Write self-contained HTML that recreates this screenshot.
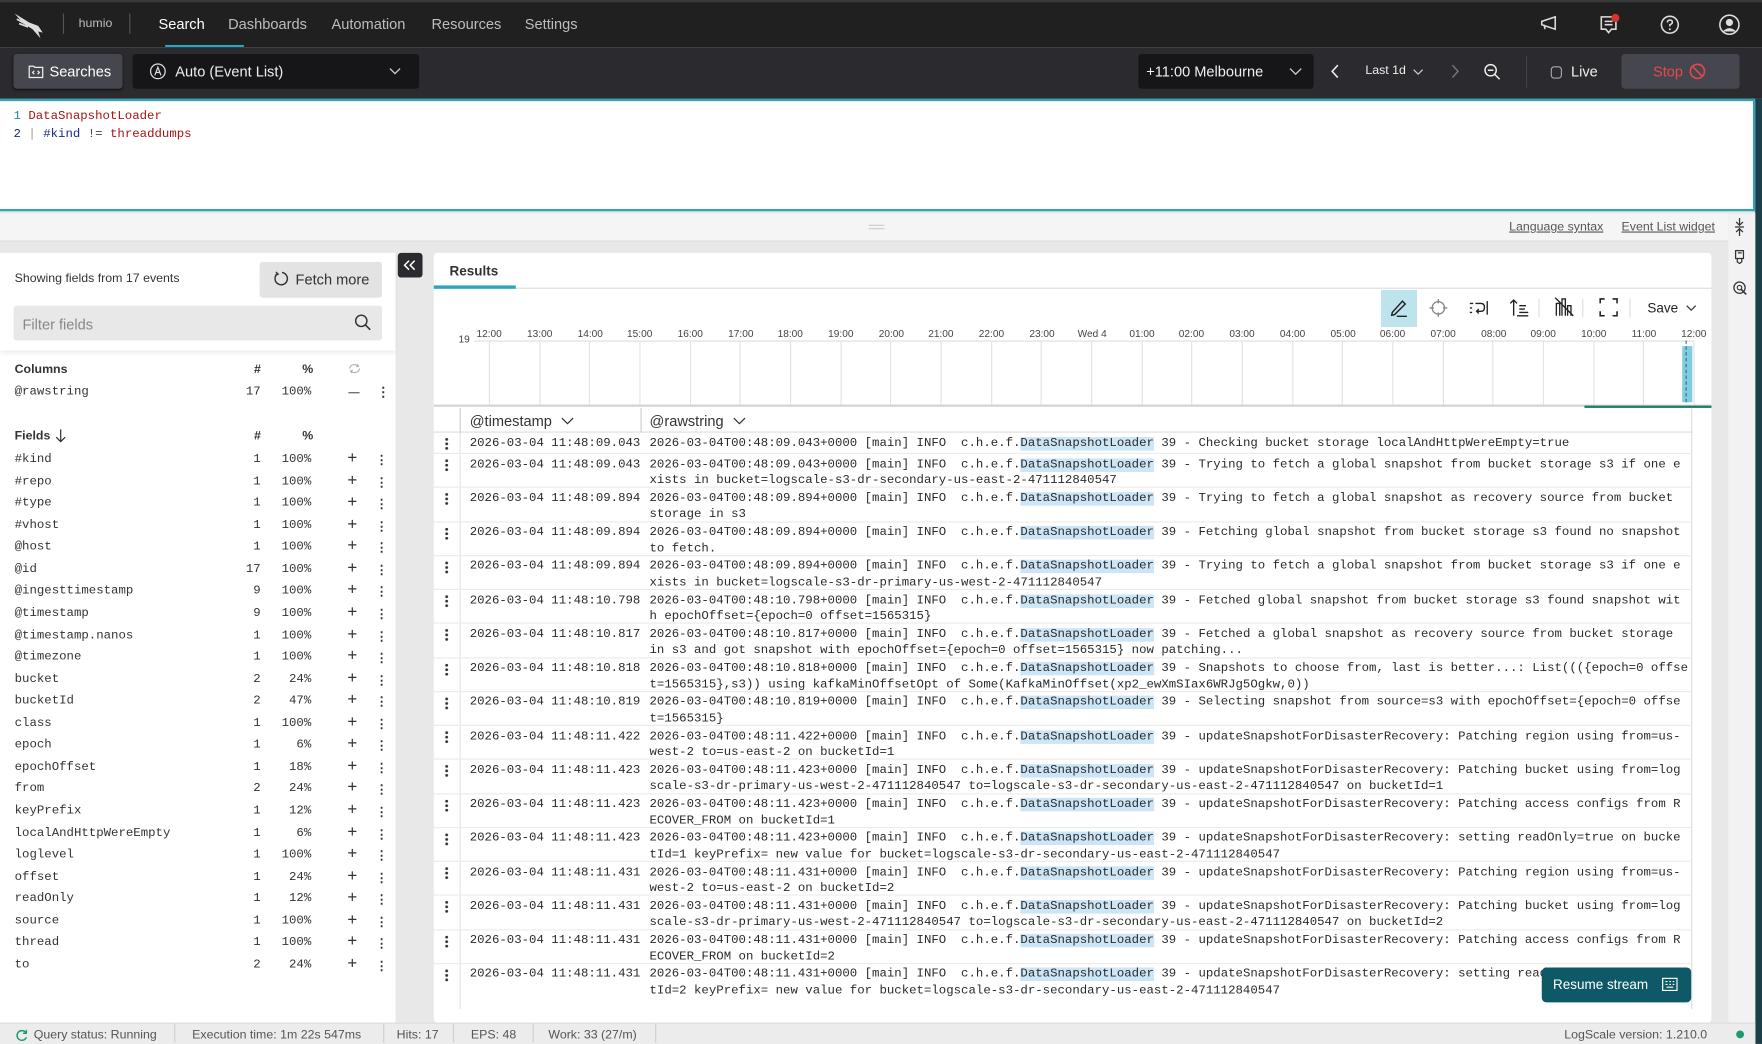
<!DOCTYPE html>
<html><head><meta charset="utf-8">
<style>
*{box-sizing:border-box;margin:0;padding:0}
html,body{width:1762px;height:1044px;overflow:hidden;background:#e8e8e8}
#w{position:absolute;left:0;top:0;width:1568px;height:929px;transform:scale(1.123724);transform-origin:0 0;font-family:"Liberation Sans",sans-serif;color:#222;background:#e8e8e8;overflow:hidden}
.a{position:absolute}
.mono{font-family:"Liberation Mono",monospace}
.nav{left:0;top:0;width:1568px;height:42px;background:#202020;border-top:2px solid #3a3a3a}
.nav span{position:absolute;top:12px;font-size:13px;color:#bdbdbd}
.tb{left:0;top:42px;width:1568px;height:46px;background:#2b2b2f}
.btn{position:absolute;border-radius:3px}
.ed{left:0;top:88px;width:1562px;height:100px;background:#fff;border:2px solid #2ba6be;border-left:none}
.fl{position:absolute;left:13px;font-size:11px;font-family:"Liberation Mono",monospace;color:#333}
.fn{position:absolute;font-size:11px;font-family:"Liberation Mono",monospace;color:#333;text-align:right}
.row{position:absolute;left:386px;width:1120px;border-bottom:1px solid #ebebeb;font-family:"Liberation Mono",monospace;font-size:11px;line-height:14.5px;color:#2a2a2a;white-space:pre}
.row .d{position:absolute;left:10px;top:4px;width:3px;height:12px;background:radial-gradient(circle,#333 1.2px,transparent 1.4px) 0 0/3px 4px repeat-y}
.row .t{position:absolute;left:32px;top:2.5px}
.row .r{position:absolute;left:192px;top:2.5px}
.h{background:#cde6f7}
.tl{position:absolute;top:292px;font-size:9px;color:#444}
.gl{position:absolute;top:303px;width:1px;height:57px;background:#e2e2e2}
.st{position:absolute;top:915px;font-size:11px;color:#555}
.sp{position:absolute;top:911px;width:1px;height:17px;background:#cfcfcf}
</style></head><body><div id="w">

<!-- top nav -->
<div class="a nav">
 <svg class="a" style="left:12px;top:9px" width="28" height="24" viewBox="0 0 28 24"><path d="M1 1 L14 9 L22 12 L26 18 L22 17 L24 23 L17 15 L9 10 Z" fill="#ddd"/><path d="M3 6 L12 11 M5 10 L13 13" stroke="#ddd" stroke-width="1.5"/></svg>
 <div class="a" style="left:56px;top:10px;width:1px;height:18px;background:#555"></div>
 <span style="left:70px;font-size:11px;top:13px">humio</span>
 <div class="a" style="left:115px;top:10px;width:1px;height:18px;background:#555"></div>
 <span style="left:141px;color:#fff">Search</span>
 <div class="a" style="left:147px;top:38px;width:70px;height:3px;background:#2ba6be"></div>
 <span style="left:203px">Dashboards</span>
 <span style="left:295px">Automation</span>
 <span style="left:384px">Resources</span>
 <span style="left:467px">Settings</span>
 <svg class="a" style="left:1370px;top:11px" width="18" height="16" viewBox="0 0 18 16"><path d="M2 6 L14 2 L14 13 L2 9 Z M4 9 L5 13" fill="none" stroke="#ddd" stroke-width="1.4"/></svg>
 <svg class="a" style="left:1423px;top:10px" width="20" height="20" viewBox="0 0 20 20"><path d="M2 3 H15 V14 H11 L8.5 17 L6 14 H2 Z M5 7 H12 M5 10 H12" fill="none" stroke="#ddd" stroke-width="1.4"/><circle cx="14.5" cy="4" r="3.6" fill="#d8332f"/></svg>
 <svg class="a" style="left:1477px;top:11px" width="18" height="18" viewBox="0 0 18 18"><circle cx="9" cy="9" r="7.5" fill="none" stroke="#ddd" stroke-width="1.4"/><path d="M6.8 7 Q7 4.8 9 4.8 Q11.2 4.8 11.2 6.8 Q11.2 8.3 9 9 V10.5" fill="none" stroke="#ddd" stroke-width="1.4"/><circle cx="9" cy="13" r="0.9" fill="#ddd"/></svg>
 <svg class="a" style="left:1529px;top:10px" width="20" height="20" viewBox="0 0 20 20"><circle cx="10" cy="10" r="8.5" fill="none" stroke="#ddd" stroke-width="1.4"/><circle cx="10" cy="8" r="3.2" fill="#ddd"/><path d="M4 16 Q10 10 16 16" fill="#ddd"/></svg>
</div>

<!-- toolbar -->
<div class="a tb">
 <div class="btn" style="left:12px;top:6px;width:97px;height:31px;background:#46464e;box-shadow:0 1px 2px #111"></div>
 <svg class="a" style="left:25px;top:15px" width="14" height="13" viewBox="0 0 14 13"><path d="M1 2 H5 L6 3 H13 V12 H1 Z M5.5 6 L4 7.5 L5.5 9 M8.5 6 L10 7.5 L8.5 9" fill="none" stroke="#eee" stroke-width="1.1"/></svg>
 <div class="a" style="left:44px;top:14px;font-size:13px;color:#fff">Searches</div>
 <div class="btn" style="left:118px;top:6px;width:255px;height:31px;background:#161618"></div>
 <svg class="a" style="left:133px;top:14px" width="15" height="15" viewBox="0 0 15 15"><circle cx="7.5" cy="7.5" r="6.5" fill="none" stroke="#ddd" stroke-width="1.1"/><path d="M4.8 11 L7.5 3.8 L10.2 11 M5.8 8.5 H9.2" fill="none" stroke="#ddd" stroke-width="1.1"/></svg>
 <div class="a" style="left:156px;top:14px;font-size:13px;color:#eee">Auto (Event List)</div>
 <svg class="a" style="left:346px;top:18px" width="11" height="7" viewBox="0 0 11 7"><path d="M1 1 L5.5 5.5 L10 1" fill="none" stroke="#ccc" stroke-width="1.2"/></svg>
 <div class="btn" style="left:1013px;top:6px;width:156px;height:31px;background:#161618"></div>
 <div class="a" style="left:1020px;top:14px;font-size:13px;color:#eee">+11:00 Melbourne</div>
 <svg class="a" style="left:1147px;top:18px" width="12" height="7" viewBox="0 0 12 7"><path d="M1 1 L6 6 L11 1" fill="none" stroke="#ccc" stroke-width="1.2"/></svg>
 <svg class="a" style="left:1184px;top:15px" width="8" height="13" viewBox="0 0 8 13"><path d="M6.5 1 L1.5 6.5 L6.5 12" fill="none" stroke="#eee" stroke-width="1.4"/></svg>
 <div class="a" style="left:1215px;top:15px;font-size:11px;color:#eee">Last 1d</div>
 <svg class="a" style="left:1257px;top:19px" width="10" height="6" viewBox="0 0 10 6"><path d="M1 1 L5 5 L9 1" fill="none" stroke="#ccc" stroke-width="1.1"/></svg>
 <svg class="a" style="left:1291px;top:15px" width="8" height="13" viewBox="0 0 8 13"><path d="M1.5 1 L6.5 6.5 L1.5 12" fill="none" stroke="#777" stroke-width="1.3"/></svg>
 <svg class="a" style="left:1320px;top:14px" width="16" height="16" viewBox="0 0 16 16"><circle cx="6.5" cy="6.5" r="5" fill="none" stroke="#eee" stroke-width="1.3"/><path d="M4 6.5 H9 M10.2 10.2 L14.5 14.5" stroke="#eee" stroke-width="1.3"/></svg>
 <div class="a" style="left:1358px;top:8px;width:1px;height:28px;background:#444"></div>
 <div class="a" style="left:1380px;top:17px;width:10px;height:11px;border:1.3px solid #aaa;border-radius:3px"></div>
 <div class="a" style="left:1398px;top:14px;font-size:13px;color:#eee">Live</div>
 <div class="btn" style="left:1443px;top:6px;width:105px;height:31px;background:#46464e"></div>
 <div class="a" style="left:1471px;top:14px;font-size:13px;color:#e5484d">Stop</div>
 <svg class="a" style="left:1503px;top:14px" width="15" height="15" viewBox="0 0 15 15"><circle cx="7.5" cy="7.5" r="6.3" fill="none" stroke="#e5484d" stroke-width="1.4"/><path d="M3 3 L12 12" stroke="#e5484d" stroke-width="1.4"/></svg>
</div>

<!-- editor -->
<div class="a ed">
 <div class="a mono" style="left:12px;top:6px;font-size:11px;line-height:16px;white-space:pre"><span style="color:#2a8aa6">1</span> <span style="color:#a31515">DataSnapshotLoader</span>
<span style="color:#1a2a8a">2</span> <span style="color:#999">|</span> <span style="color:#1a2a8a">#kind</span> <span style="color:#444">!=</span> <span style="color:#a31515">threaddumps</span></div>
</div>
<div class="a" style="left:1562px;top:88px;width:6px;height:841px;background:#1d3f4a"></div>

<!-- sub bar -->
<div class="a" style="left:0;top:190px;width:1538px;height:25px;background:#f5f5f5;border-bottom:1px solid #ddd"></div>
<div class="a" style="left:773px;top:200px;width:14px;height:4px;border-top:1px solid #ccc;border-bottom:1px solid #ccc"></div>
<div class="a" style="left:1343px;top:196px;font-size:11px;color:#555;text-decoration:underline">Language syntax</div>
<div class="a" style="left:1443px;top:196px;font-size:11px;color:#555;text-decoration:underline">Event List widget</div>
<div class="a" style="left:1538px;top:190px;width:24px;height:739px;background:#f2f2f2"></div>
<svg class="a" style="left:1543px;top:194px" width="10" height="16" viewBox="0 0 10 16"><path d="M5 0 V6 M2 3.5 L5 6.5 L8 3.5 M1 8 H9 M5 16 V10 M2 12.5 L5 9.5 L8 12.5" fill="none" stroke="#333" stroke-width="1.1"/></svg>
<svg class="a" style="left:1543px;top:222px" width="10" height="13" viewBox="0 0 10 13"><path d="M1.5 1 H8.5 V8 H1.5 Z M3 8 V11 L5 12.5 L7 11 V8 M3.5 3 H7" fill="none" stroke="#333" stroke-width="1.1"/></svg>
<svg class="a" style="left:1542px;top:250px" width="13" height="13" viewBox="0 0 13 13"><circle cx="6" cy="6" r="5" fill="none" stroke="#333" stroke-width="1.1"/><circle cx="6" cy="6" r="2" fill="none" stroke="#333"/><path d="M7 7 L12 12" stroke="#333" stroke-width="1.4"/></svg>

<!-- left panel -->
<div class="a" style="left:0;top:225px;width:352px;height:685px;background:#fff"></div>
<div class="a" style="left:0;top:225px;width:352px;height:87px;background:#fff;box-shadow:0 2px 4px rgba(0,0,0,.08)"></div>
<div class="a" style="left:13px;top:242px;font-size:11px;color:#333">Showing fields from 17 events</div>
<div class="btn" style="left:231px;top:233px;width:109px;height:32px;background:#e3e3e3"></div>
<svg class="a" style="left:244px;top:241px" width="14" height="14" viewBox="0 0 14 14"><path d="M3 2.5 A5.5 5.5 0 1 0 7 1.5" fill="none" stroke="#333" stroke-width="1.3"/><path d="M1.5 1 L3.5 3 L1 4" fill="none" stroke="#333" stroke-width="1.2"/></svg>
<div class="a" style="left:263px;top:241px;font-size:13px;color:#333">Fetch more</div>
<div class="btn" style="left:12px;top:272px;width:328px;height:31px;background:#e8e8e8"></div>
<div class="a" style="left:20px;top:281px;font-size:13px;color:#888">Filter fields</div>
<svg class="a" style="left:315px;top:279px" width="16" height="16" viewBox="0 0 16 16"><circle cx="6.5" cy="6.5" r="5" fill="none" stroke="#333" stroke-width="1.3"/><path d="M10.2 10.2 L14.5 14.5" stroke="#333" stroke-width="1.4"/></svg>

<div class="a" style="left:13px;top:323px;font-size:11px;font-weight:bold;color:#333">Columns</div>
<div class="a" style="left:226px;top:323px;font-size:11px;font-weight:bold;color:#333">#</div>
<div class="a" style="left:269px;top:323px;font-size:11px;font-weight:bold;color:#333">%</div>
<svg class="a" style="left:310px;top:323px" width="11" height="10" viewBox="0 0 11 10"><path d="M1 5 A4.5 4 0 0 1 9 3 M10 5 A4.5 4 0 0 1 2 7 M8 1 L9 3 L7 3.5 M3 9 L2 7 L4 6.5" fill="none" stroke="#aaa" stroke-width="0.9"/></svg>
<div class="fl" style="top:343px">@rawstring</div>
<div class="fn" style="left:200px;width:32px;top:343px">17</div>
<div class="fn" style="left:237px;width:40px;top:343px">100%</div>
<div class="a" style="left:310px;top:349px;width:10px;height:1px;background:#555"></div>
<div class="a" style="left:335px;top:342px;font-size:12px;font-weight:bold;color:#333">⋮</div>

<div class="a" style="left:13px;top:382px;font-size:11px;font-weight:bold;color:#333">Fields</div>
<svg class="a" style="left:49px;top:382px" width="10" height="12" viewBox="0 0 10 12"><path d="M5 0 V11 M1 7 L5 11 L9 7" fill="none" stroke="#333" stroke-width="1.1"/></svg>
<div class="a" style="left:226px;top:382px;font-size:11px;font-weight:bold;color:#333">#</div>
<div class="a" style="left:269px;top:382px;font-size:11px;font-weight:bold;color:#333">%</div>

<div class="a" style="left:0;top:403px;width:352px">
<div style="position:relative;height:19.57px"><div class="fl" style="top:0">#kind</div><div class="fn" style="left:200px;width:32px">1</div><div class="fn" style="left:237px;width:40px">100%</div><div class="fn" style="left:309px;font-size:15px;top:-3px">+</div><div class="fn" style="left:334px;top:0;font-weight:bold;font-family:'Liberation Sans'">⋮</div></div>
<div style="position:relative;height:19.57px"><div class="fl" style="top:0">#repo</div><div class="fn" style="left:200px;width:32px">1</div><div class="fn" style="left:237px;width:40px">100%</div><div class="fn" style="left:309px;font-size:15px;top:-3px">+</div><div class="fn" style="left:334px;font-weight:bold;font-family:'Liberation Sans'">⋮</div></div>
<div style="position:relative;height:19.57px"><div class="fl" style="top:0">#type</div><div class="fn" style="left:200px;width:32px">1</div><div class="fn" style="left:237px;width:40px">100%</div><div class="fn" style="left:309px;font-size:15px;top:-3px">+</div><div class="fn" style="left:334px;font-weight:bold;font-family:'Liberation Sans'">⋮</div></div>
<div style="position:relative;height:19.57px"><div class="fl" style="top:0">#vhost</div><div class="fn" style="left:200px;width:32px">1</div><div class="fn" style="left:237px;width:40px">100%</div><div class="fn" style="left:309px;font-size:15px;top:-3px">+</div><div class="fn" style="left:334px;font-weight:bold;font-family:'Liberation Sans'">⋮</div></div>
<div style="position:relative;height:19.57px"><div class="fl" style="top:0">@host</div><div class="fn" style="left:200px;width:32px">1</div><div class="fn" style="left:237px;width:40px">100%</div><div class="fn" style="left:309px;font-size:15px;top:-3px">+</div><div class="fn" style="left:334px;font-weight:bold;font-family:'Liberation Sans'">⋮</div></div>
<div style="position:relative;height:19.57px"><div class="fl" style="top:0">@id</div><div class="fn" style="left:200px;width:32px">17</div><div class="fn" style="left:237px;width:40px">100%</div><div class="fn" style="left:309px;font-size:15px;top:-3px">+</div><div class="fn" style="left:334px;font-weight:bold;font-family:'Liberation Sans'">⋮</div></div>
<div style="position:relative;height:19.57px"><div class="fl" style="top:0">@ingesttimestamp</div><div class="fn" style="left:200px;width:32px">9</div><div class="fn" style="left:237px;width:40px">100%</div><div class="fn" style="left:309px;font-size:15px;top:-3px">+</div><div class="fn" style="left:334px;font-weight:bold;font-family:'Liberation Sans'">⋮</div></div>
<div style="position:relative;height:19.57px"><div class="fl" style="top:0">@timestamp</div><div class="fn" style="left:200px;width:32px">9</div><div class="fn" style="left:237px;width:40px">100%</div><div class="fn" style="left:309px;font-size:15px;top:-3px">+</div><div class="fn" style="left:334px;font-weight:bold;font-family:'Liberation Sans'">⋮</div></div>
<div style="position:relative;height:19.57px"><div class="fl" style="top:0">@timestamp.nanos</div><div class="fn" style="left:200px;width:32px">1</div><div class="fn" style="left:237px;width:40px">100%</div><div class="fn" style="left:309px;font-size:15px;top:-3px">+</div><div class="fn" style="left:334px;font-weight:bold;font-family:'Liberation Sans'">⋮</div></div>
<div style="position:relative;height:19.57px"><div class="fl" style="top:0">@timezone</div><div class="fn" style="left:200px;width:32px">1</div><div class="fn" style="left:237px;width:40px">100%</div><div class="fn" style="left:309px;font-size:15px;top:-3px">+</div><div class="fn" style="left:334px;font-weight:bold;font-family:'Liberation Sans'">⋮</div></div>
<div style="position:relative;height:19.57px"><div class="fl" style="top:0">bucket</div><div class="fn" style="left:200px;width:32px">2</div><div class="fn" style="left:237px;width:40px">24%</div><div class="fn" style="left:309px;font-size:15px;top:-3px">+</div><div class="fn" style="left:334px;font-weight:bold;font-family:'Liberation Sans'">⋮</div></div>
<div style="position:relative;height:19.57px"><div class="fl" style="top:0">bucketId</div><div class="fn" style="left:200px;width:32px">2</div><div class="fn" style="left:237px;width:40px">47%</div><div class="fn" style="left:309px;font-size:15px;top:-3px">+</div><div class="fn" style="left:334px;font-weight:bold;font-family:'Liberation Sans'">⋮</div></div>
<div style="position:relative;height:19.57px"><div class="fl" style="top:0">class</div><div class="fn" style="left:200px;width:32px">1</div><div class="fn" style="left:237px;width:40px">100%</div><div class="fn" style="left:309px;font-size:15px;top:-3px">+</div><div class="fn" style="left:334px;font-weight:bold;font-family:'Liberation Sans'">⋮</div></div>
<div style="position:relative;height:19.57px"><div class="fl" style="top:0">epoch</div><div class="fn" style="left:200px;width:32px">1</div><div class="fn" style="left:237px;width:40px">6%</div><div class="fn" style="left:309px;font-size:15px;top:-3px">+</div><div class="fn" style="left:334px;font-weight:bold;font-family:'Liberation Sans'">⋮</div></div>
<div style="position:relative;height:19.57px"><div class="fl" style="top:0">epochOffset</div><div class="fn" style="left:200px;width:32px">1</div><div class="fn" style="left:237px;width:40px">18%</div><div class="fn" style="left:309px;font-size:15px;top:-3px">+</div><div class="fn" style="left:334px;font-weight:bold;font-family:'Liberation Sans'">⋮</div></div>
<div style="position:relative;height:19.57px"><div class="fl" style="top:0">from</div><div class="fn" style="left:200px;width:32px">2</div><div class="fn" style="left:237px;width:40px">24%</div><div class="fn" style="left:309px;font-size:15px;top:-3px">+</div><div class="fn" style="left:334px;font-weight:bold;font-family:'Liberation Sans'">⋮</div></div>
<div style="position:relative;height:19.57px"><div class="fl" style="top:0">keyPrefix</div><div class="fn" style="left:200px;width:32px">1</div><div class="fn" style="left:237px;width:40px">12%</div><div class="fn" style="left:309px;font-size:15px;top:-3px">+</div><div class="fn" style="left:334px;font-weight:bold;font-family:'Liberation Sans'">⋮</div></div>
<div style="position:relative;height:19.57px"><div class="fl" style="top:0">localAndHttpWereEmpty</div><div class="fn" style="left:200px;width:32px">1</div><div class="fn" style="left:237px;width:40px">6%</div><div class="fn" style="left:309px;font-size:15px;top:-3px">+</div><div class="fn" style="left:334px;font-weight:bold;font-family:'Liberation Sans'">⋮</div></div>
<div style="position:relative;height:19.57px"><div class="fl" style="top:0">loglevel</div><div class="fn" style="left:200px;width:32px">1</div><div class="fn" style="left:237px;width:40px">100%</div><div class="fn" style="left:309px;font-size:15px;top:-3px">+</div><div class="fn" style="left:334px;font-weight:bold;font-family:'Liberation Sans'">⋮</div></div>
<div style="position:relative;height:19.57px"><div class="fl" style="top:0">offset</div><div class="fn" style="left:200px;width:32px">1</div><div class="fn" style="left:237px;width:40px">24%</div><div class="fn" style="left:309px;font-size:15px;top:-3px">+</div><div class="fn" style="left:334px;font-weight:bold;font-family:'Liberation Sans'">⋮</div></div>
<div style="position:relative;height:19.57px"><div class="fl" style="top:0">readOnly</div><div class="fn" style="left:200px;width:32px">1</div><div class="fn" style="left:237px;width:40px">12%</div><div class="fn" style="left:309px;font-size:15px;top:-3px">+</div><div class="fn" style="left:334px;font-weight:bold;font-family:'Liberation Sans'">⋮</div></div>
<div style="position:relative;height:19.57px"><div class="fl" style="top:0">source</div><div class="fn" style="left:200px;width:32px">1</div><div class="fn" style="left:237px;width:40px">100%</div><div class="fn" style="left:309px;font-size:15px;top:-3px">+</div><div class="fn" style="left:334px;font-weight:bold;font-family:'Liberation Sans'">⋮</div></div>
<div style="position:relative;height:19.57px"><div class="fl" style="top:0">thread</div><div class="fn" style="left:200px;width:32px">1</div><div class="fn" style="left:237px;width:40px">100%</div><div class="fn" style="left:309px;font-size:15px;top:-3px">+</div><div class="fn" style="left:334px;font-weight:bold;font-family:'Liberation Sans'">⋮</div></div>
<div style="position:relative;height:19.57px"><div class="fl" style="top:0">to</div><div class="fn" style="left:200px;width:32px">2</div><div class="fn" style="left:237px;width:40px">24%</div><div class="fn" style="left:309px;font-size:15px;top:-3px">+</div><div class="fn" style="left:334px;font-weight:bold;font-family:'Liberation Sans'">⋮</div></div>
</div>

<!-- collapse -->
<div class="btn" style="left:354px;top:225px;width:22px;height:22px;background:#2b2b2f"></div>
<svg class="a" style="left:359px;top:231px" width="12" height="10" viewBox="0 0 12 10"><path d="M5 1 L1 5 L5 9 M10 1 L6 5 L10 9" fill="none" stroke="#fff" stroke-width="1.3"/></svg>

<!-- results panel -->
<div class="a" style="left:386px;top:225px;width:1137px;height:685px;background:#fff;border-radius:3px"></div>
<div class="a" style="left:400px;top:234px;font-size:12px;font-weight:bold;color:#333">Results</div>
<div class="a" style="left:386px;top:256px;width:1137px;height:1px;background:#ddd"></div>
<div class="a" style="left:386px;top:254px;width:73px;height:3px;background:#2ba6be"></div>

<div class="a" style="left:1229px;top:258px;width:32px;height:33px;background:#bde3ec"></div>
<svg class="a" style="left:1236px;top:265px" width="18" height="18" viewBox="0 0 18 18"><path d="M3 13 L12 3 L14.5 5.5 L5 15 L2.5 15.5 Z M7 16.5 H16" fill="none" stroke="#222" stroke-width="1.3"/></svg>
<svg class="a" style="left:1272px;top:266px" width="16" height="16" viewBox="0 0 16 16"><circle cx="8" cy="8" r="5.5" fill="none" stroke="#888" stroke-width="1.2"/><path d="M8 0 V4 M8 12 V16 M0 8 H4 M12 8 H16" stroke="#888" stroke-width="1.2"/></svg>
<svg class="a" style="left:1307px;top:266px" width="18" height="16" viewBox="0 0 18 16"><path d="M1 4 H4 M1 8 H3 M1 12 H3 M6 4 H11 Q14 4 14 7.5 Q14 11 11 11 H7 M9 9 L7 11 L9 13 M16.5 2 V14" fill="none" stroke="#222" stroke-width="1.2"/></svg>
<svg class="a" style="left:1343px;top:265px" width="18" height="17" viewBox="0 0 18 17"><path d="M4 16 V2 M1 5 L4 2 L7 5 M9 7 H15 M9 10 H14 M9 13 H17 M7 16 H17" fill="none" stroke="#222" stroke-width="1.2"/></svg>
<div class="a" style="left:1369px;top:266px;width:1px;height:16px;background:#ddd"></div>
<svg class="a" style="left:1383px;top:264px" width="18" height="18" viewBox="0 0 18 18"><path d="M2 17 V6 H5 V17 M7 17 V2 H10 V17 M12 17 V8 H15 V17 M1 1 L17 17" fill="none" stroke="#222" stroke-width="1.2"/></svg>
<div class="a" style="left:1408px;top:266px;width:1px;height:16px;background:#ddd"></div>
<svg class="a" style="left:1423px;top:265px" width="17" height="17" viewBox="0 0 17 17"><path d="M1 5 V1 H5 M12 1 H16 V5 M16 12 V16 H12 M5 16 H1 V12" fill="none" stroke="#222" stroke-width="1.4"/></svg>
<div class="a" style="left:1450px;top:266px;width:1px;height:16px;background:#ddd"></div>
<div class="a" style="left:1466px;top:267px;font-size:12px;color:#222">Save</div>
<svg class="a" style="left:1500px;top:271px" width="10" height="6" viewBox="0 0 10 6"><path d="M1 1 L5 5 L9 1" fill="none" stroke="#333" stroke-width="1.1"/></svg>

<!-- chart -->
<div class="a" style="left:408px;top:297px;font-size:9px;color:#444">19</div>
<div class="a" style="left:422px;top:303px;width:1086px;height:1px;background:#ddd"></div>
<div class="tl" style="left:424px">12:00</div><div class="tl" style="left:469px">13:00</div><div class="tl" style="left:514px">14:00</div><div class="tl" style="left:558px">15:00</div><div class="tl" style="left:603px">16:00</div><div class="tl" style="left:648px">17:00</div><div class="tl" style="left:692px">18:00</div><div class="tl" style="left:737px">19:00</div><div class="tl" style="left:782px">20:00</div><div class="tl" style="left:826px">21:00</div><div class="tl" style="left:871px">22:00</div><div class="tl" style="left:916px">23:00</div><div class="tl" style="left:959px">Wed 4</div><div class="tl" style="left:1005px">01:00</div><div class="tl" style="left:1049px">02:00</div><div class="tl" style="left:1094px">03:00</div><div class="tl" style="left:1139px">04:00</div><div class="tl" style="left:1184px">05:00</div><div class="tl" style="left:1228px">06:00</div><div class="tl" style="left:1273px">07:00</div><div class="tl" style="left:1318px">08:00</div><div class="tl" style="left:1362px">09:00</div><div class="tl" style="left:1407px">10:00</div><div class="tl" style="left:1452px">11:00</div><div class="tl" style="left:1496px">12:00</div>
<div class="gl" style="left:435px"></div><div class="gl" style="left:480px"></div><div class="gl" style="left:524px"></div><div class="gl" style="left:569px"></div><div class="gl" style="left:614px"></div><div class="gl" style="left:658px"></div><div class="gl" style="left:703px"></div><div class="gl" style="left:748px"></div><div class="gl" style="left:792px"></div><div class="gl" style="left:837px"></div><div class="gl" style="left:882px"></div><div class="gl" style="left:926px"></div><div class="gl" style="left:971px"></div><div class="gl" style="left:1016px"></div><div class="gl" style="left:1060px"></div><div class="gl" style="left:1105px"></div><div class="gl" style="left:1150px"></div><div class="gl" style="left:1194px"></div><div class="gl" style="left:1239px"></div><div class="gl" style="left:1284px"></div><div class="gl" style="left:1328px"></div><div class="gl" style="left:1373px"></div><div class="gl" style="left:1418px"></div><div class="gl" style="left:1462px"></div><div class="gl" style="left:1507px"></div>
<div class="a" style="left:1497px;top:308px;width:9px;height:50px;background:#80cde0"></div>
<div class="a" style="left:1500px;top:303px;width:0;height:55px;border-left:1px dashed #2b6f80"></div>
<div class="a" style="left:386px;top:360px;width:1137px;height:2px;background:#d4d4d4"></div>
<div class="a" style="left:1410px;top:361px;width:113px;height:2px;background:#1f7a5f"></div>

<!-- table header -->
<div class="a" style="left:386px;top:363px;width:1120px;height:22px;border-bottom:1px solid #ddd"></div>
<div class="a" style="left:409px;top:363px;width:1px;height:22px;background:#ccc"></div>
<div class="a" style="left:570px;top:363px;width:1px;height:22px;background:#ccc"></div>
<div class="a" style="left:1505px;top:363px;width:1px;height:535px;background:#ddd"></div>
<div class="a" style="left:418px;top:367px;font-size:13px;color:#333">@timestamp</div>
<svg class="a" style="left:499px;top:371px" width="12" height="7" viewBox="0 0 12 7"><path d="M1 1 L6 6 L11 1" fill="none" stroke="#333" stroke-width="1.1"/></svg>
<div class="a" style="left:578px;top:367px;font-size:13px;color:#333">@rawstring</div>
<svg class="a" style="left:652px;top:371px" width="12" height="7" viewBox="0 0 12 7"><path d="M1 1 L6 6 L11 1" fill="none" stroke="#333" stroke-width="1.1"/></svg>
<div class="a" style="left:409px;top:385px;width:1px;height:513px;background:#e3e3e3"></div>

<!-- rows -->
<div class="row" style="top:385px;height:19px"><i class="d"></i><span class="t">2026-03-04 11:48:09.043</span><span class="r">2026-03-04T00:48:09.043+0000 [main] INFO  c.h.e.f.<span class="h">DataSnapshotLoader</span> 39 - Checking bucket storage localAndHttpWereEmpty=true</span></div>
<div class="row" style="top:404px;height:30.25px"><i class="d"></i><span class="t">2026-03-04 11:48:09.043</span><span class="r">2026-03-04T00:48:09.043+0000 [main] INFO  c.h.e.f.<span class="h">DataSnapshotLoader</span> 39 - Trying to fetch a global snapshot from bucket storage s3 if one e
xists in bucket=logscale-s3-dr-secondary-us-east-2-471112840547</span></div>
<div class="row" style="top:434.25px;height:30.25px"><i class="d"></i><span class="t">2026-03-04 11:48:09.894</span><span class="r">2026-03-04T00:48:09.894+0000 [main] INFO  c.h.e.f.<span class="h">DataSnapshotLoader</span> 39 - Trying to fetch a global snapshot as recovery source from bucket
storage in s3</span></div>
<div class="row" style="top:464.5px;height:30.25px"><i class="d"></i><span class="t">2026-03-04 11:48:09.894</span><span class="r">2026-03-04T00:48:09.894+0000 [main] INFO  c.h.e.f.<span class="h">DataSnapshotLoader</span> 39 - Fetching global snapshot from bucket storage s3 found no snapshot
to fetch.</span></div>
<div class="row" style="top:494.75px;height:30.25px"><i class="d"></i><span class="t">2026-03-04 11:48:09.894</span><span class="r">2026-03-04T00:48:09.894+0000 [main] INFO  c.h.e.f.<span class="h">DataSnapshotLoader</span> 39 - Trying to fetch a global snapshot from bucket storage s3 if one e
xists in bucket=logscale-s3-dr-primary-us-west-2-471112840547</span></div>
<div class="row" style="top:525px;height:30.25px"><i class="d"></i><span class="t">2026-03-04 11:48:10.798</span><span class="r">2026-03-04T00:48:10.798+0000 [main] INFO  c.h.e.f.<span class="h">DataSnapshotLoader</span> 39 - Fetched global snapshot from bucket storage s3 found snapshot wit
h epochOffset={epoch=0 offset=1565315}</span></div>
<div class="row" style="top:555.25px;height:30.25px"><i class="d"></i><span class="t">2026-03-04 11:48:10.817</span><span class="r">2026-03-04T00:48:10.817+0000 [main] INFO  c.h.e.f.<span class="h">DataSnapshotLoader</span> 39 - Fetched a global snapshot as recovery source from bucket storage
in s3 and got snapshot with epochOffset={epoch=0 offset=1565315} now patching...</span></div>
<div class="row" style="top:585.5px;height:30.25px"><i class="d"></i><span class="t">2026-03-04 11:48:10.818</span><span class="r">2026-03-04T00:48:10.818+0000 [main] INFO  c.h.e.f.<span class="h">DataSnapshotLoader</span> 39 - Snapshots to choose from, last is better...: List((({epoch=0 offse
t=1565315},s3)) using kafkaMinOffsetOpt of Some(KafkaMinOffset(xp2_ewXmSIax6WRJg5Ogkw,0))</span></div>
<div class="row" style="top:615.75px;height:30.25px"><i class="d"></i><span class="t">2026-03-04 11:48:10.819</span><span class="r">2026-03-04T00:48:10.819+0000 [main] INFO  c.h.e.f.<span class="h">DataSnapshotLoader</span> 39 - Selecting snapshot from source=s3 with epochOffset={epoch=0 offse
t=1565315}</span></div>
<div class="row" style="top:646px;height:30.25px"><i class="d"></i><span class="t">2026-03-04 11:48:11.422</span><span class="r">2026-03-04T00:48:11.422+0000 [main] INFO  c.h.e.f.<span class="h">DataSnapshotLoader</span> 39 - updateSnapshotForDisasterRecovery: Patching region using from=us-
west-2 to=us-east-2 on bucketId=1</span></div>
<div class="row" style="top:676.25px;height:30.25px"><i class="d"></i><span class="t">2026-03-04 11:48:11.423</span><span class="r">2026-03-04T00:48:11.423+0000 [main] INFO  c.h.e.f.<span class="h">DataSnapshotLoader</span> 39 - updateSnapshotForDisasterRecovery: Patching bucket using from=log
scale-s3-dr-primary-us-west-2-471112840547 to=logscale-s3-dr-secondary-us-east-2-471112840547 on bucketId=1</span></div>
<div class="row" style="top:706.5px;height:30.25px"><i class="d"></i><span class="t">2026-03-04 11:48:11.423</span><span class="r">2026-03-04T00:48:11.423+0000 [main] INFO  c.h.e.f.<span class="h">DataSnapshotLoader</span> 39 - updateSnapshotForDisasterRecovery: Patching access configs from R
ECOVER_FROM on bucketId=1</span></div>
<div class="row" style="top:736.75px;height:30.25px"><i class="d"></i><span class="t">2026-03-04 11:48:11.423</span><span class="r">2026-03-04T00:48:11.423+0000 [main] INFO  c.h.e.f.<span class="h">DataSnapshotLoader</span> 39 - updateSnapshotForDisasterRecovery: setting readOnly=true on bucke
tId=1 keyPrefix= new value for bucket=logscale-s3-dr-secondary-us-east-2-471112840547</span></div>
<div class="row" style="top:767px;height:30.25px"><i class="d"></i><span class="t">2026-03-04 11:48:11.431</span><span class="r">2026-03-04T00:48:11.431+0000 [main] INFO  c.h.e.f.<span class="h">DataSnapshotLoader</span> 39 - updateSnapshotForDisasterRecovery: Patching region using from=us-
west-2 to=us-east-2 on bucketId=2</span></div>
<div class="row" style="top:797.25px;height:30.25px"><i class="d"></i><span class="t">2026-03-04 11:48:11.431</span><span class="r">2026-03-04T00:48:11.431+0000 [main] INFO  c.h.e.f.<span class="h">DataSnapshotLoader</span> 39 - updateSnapshotForDisasterRecovery: Patching bucket using from=log
scale-s3-dr-primary-us-west-2-471112840547 to=logscale-s3-dr-secondary-us-east-2-471112840547 on bucketId=2</span></div>
<div class="row" style="top:827.5px;height:30.25px"><i class="d"></i><span class="t">2026-03-04 11:48:11.431</span><span class="r">2026-03-04T00:48:11.431+0000 [main] INFO  c.h.e.f.<span class="h">DataSnapshotLoader</span> 39 - updateSnapshotForDisasterRecovery: Patching access configs from R
ECOVER_FROM on bucketId=2</span></div>
<div class="row" style="top:857.75px;height:30.25px;border-bottom:none"><i class="d"></i><span class="t">2026-03-04 11:48:11.431</span><span class="r">2026-03-04T00:48:11.431+0000 [main] INFO  c.h.e.f.<span class="h">DataSnapshotLoader</span> 39 - updateSnapshotForDisasterRecovery: setting readOnly=true on bucke
tId=2 keyPrefix= new value for bucket=logscale-s3-dr-secondary-us-east-2-471112840547</span></div>

<div class="btn" style="left:1372px;top:861px;width:133px;height:31px;background:#0d5967;border-radius:4px"></div>
<div class="a" style="left:1382px;top:869px;font-size:12px;color:#fff">Resume stream</div>
<svg class="a" style="left:1479px;top:870px" width="14" height="12" viewBox="0 0 14 12"><rect x="0.6" y="0.6" width="12.8" height="10.8" fill="none" stroke="#fff" stroke-width="1.1"/><path d="M3 3.5 H5 M6.5 3.5 H8 M9.5 3.5 H11 M3 6 H5 M6.5 6 H8 M9.5 6 H11 M4 8.5 H10" stroke="#fff" stroke-width="1"/></svg>

<!-- status bar -->
<div class="a" style="left:0;top:910px;width:1562px;height:19px;background:#ececec;border-top:1px solid #ddd"></div>
<svg class="a" style="left:14px;top:916px" width="11" height="11" viewBox="0 0 11 11"><path d="M9 3 A4.3 4.3 0 1 0 9.5 7" fill="none" stroke="#1f9a6c" stroke-width="1.3"/><path d="M9.5 0.5 V3.5 H6.5" fill="none" stroke="#1f9a6c" stroke-width="1.2"/></svg>
<div class="st" style="left:30px">Query status: Running</div>
<div class="sp" style="left:155px"></div>
<div class="st" style="left:171px">Execution time: 1m 22s 547ms</div>
<div class="sp" style="left:341px"></div>
<div class="st" style="left:353px">Hits: 17</div>
<div class="sp" style="left:403px"></div>
<div class="st" style="left:419px">EPS: 48</div>
<div class="sp" style="left:474px"></div>
<div class="st" style="left:488px">Work: 33 (27/m)</div>
<div class="sp" style="left:583px"></div>
<div class="st" style="left:1392px">LogScale version: 1.210.0</div>
<div class="a" style="left:1545px;top:917px;width:7px;height:7px;border-radius:50%;background:#1f9a6c"></div>

</div></body></html>
